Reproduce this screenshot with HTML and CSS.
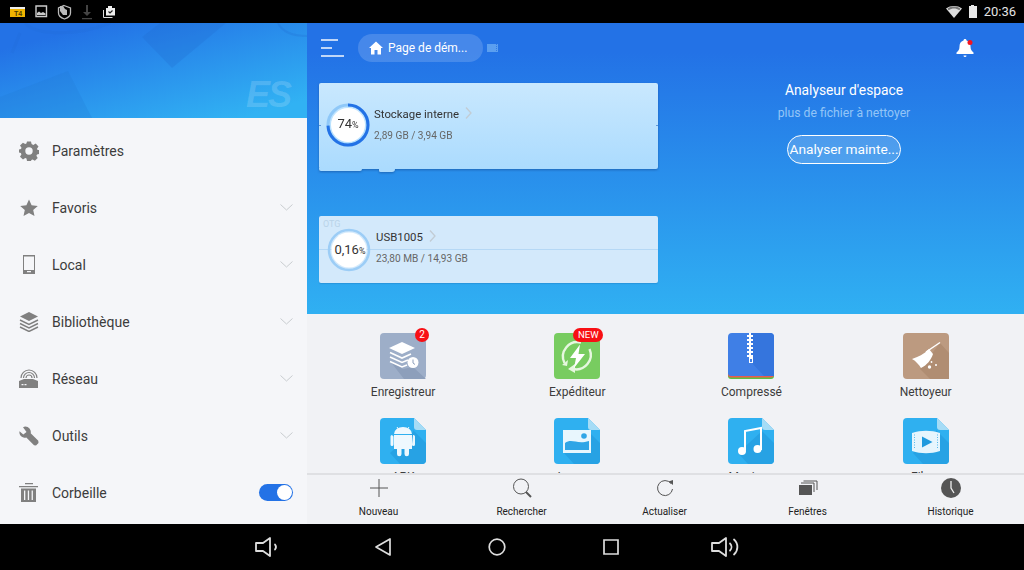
FILE: index.html
```html
<!DOCTYPE html>
<html lang="fr">
<head>
<meta charset="utf-8">
<title>ES</title>
<link rel="stylesheet" href="styles.css">
</head>
<body>
<div class="screen">
  <header class="status">
    <div class="status-left">
      <svg class="si" width="16" height="12" viewBox="0 0 16 12"><path fill="#f0b400" d="M0 3h15v8H0z"/><path fill="#eee" d="M0 1h15v2H0z"/><text x="4" y="9.5" class="t4">T4</text></svg>
      <svg class="si" width="13" height="13" viewBox="0 0 13 13"><path fill="none" stroke="#ccc" stroke-width="1.4" d="M1 1h10.500v10.500H1z"/><path fill="#ccc" d="M2 10V8l2-1.500 2 1.500 2-1 2.500 1.500V10z"/></svg>
      <svg class="si" width="15" height="16" viewBox="0 0 15 16"><path fill="none" stroke="#bbb" stroke-width="1.300" d="M7 1.500 13.500 4v5c0 3-3 5-6 6-3-1-6-3-6-6V4z"/><path fill="#bbb" d="M3 2l3 0 2 3 2 1v5H6L3 7z"/></svg>
      <svg class="si" width="12" height="16" viewBox="0 0 12 16"><path fill="#444" d="M5 1h2v7h3l-4 4-4-4h3zM1 14h10v1.300H1z"/></svg>
      <svg class="si" width="14" height="14" viewBox="0 0 14 14"><path fill="#eee" d="M4 3h2V1h4v2h3v7.500H4z"/><path fill="none" stroke="#222" stroke-width="1.200" d="M6.500 6.500l1.500 1.500 2.500-2.500"/><path fill="none" stroke="#ddd" d="M1.500 5v7.500h9"/></svg>
    </div>
    <div class="status-right">
      <svg width="16" height="12" viewBox="0 0 16 12"><path fill="#ddd" d="M0 2.500C4.500-.8 11.500-.8 16 2.500L8 12z"/><path fill="#777" d="M1.500 2.800C5-.2 11-.2 14.500 2.800L13.300 4.200C10 2 6 2 2.700 4.200z"/></svg>
      <svg width="10" height="13" viewBox="0 0 10 13"><path fill="#e8e8e8" d="M3 0h3v1h3v12H1V1h2z"/></svg>
      <span class="clock">20:36</span>
    </div>
  </header>

  <div class="app">
    <aside class="drawer">
      <div class="drawer-head">
        <svg class="drawer-art" width="307" height="95" viewBox="0 0 307 95">
          <path fill="#1f6bd0" fill-opacity=".28" d="M142 14 172 45 226 0H160z"/>
          <path fill="#1f78d0" fill-opacity=".22" d="M0 74 68 48 92 95H0z"/>
          <path fill="none" stroke="#1f6bd0" stroke-opacity=".18" stroke-width="3" d="M25 0c10 12 50 14 85 0M12 30l8-20"/>
          <path fill="none" stroke="#1f6bd0" stroke-opacity=".25" stroke-width="2" d="M278 0c5 10 15 13 29 13"/>
        </svg>
        <span class="es">ES</span>
      </div>
      <nav class="menu">
        <div class="mi">
          <svg class="mi-ic" width="20" height="20" viewBox="0 0 20 20"><path fill="#808080" fill-rule="evenodd" d="M8 .5h4l.6 2.600 1.700.8L16.700 2.500 19.500 5.500 18 7.700l.6 1.300H20v4l-2 .5-.6 1.300 1.300 2.300-2.800 2.700-2.300-1.300-1.200.5L12 20H8l-.5-2.500-1.300-.5-2.200 1.400L1 15.800l1.400-2.300L1.900 12 0 11.500V8.500l2-.5.500-1.300L1 4.500 3.900 1.700 6.200 3l1.200-.5zM10 6.300a3.700 3.700 0 1 0 0 7.400 3.700 3.700 0 0 0 0-7.400z"/></svg>
          <span class="mi-label">Paramètres</span>
        </div>
        <div class="mi">
          <svg class="mi-ic" width="20" height="20" viewBox="0 0 20 20"><path fill="#808080" d="M10 1.500l2.600 5.700 6.200.7-4.600 4.100 1.300 6.100L10 15l-5.500 3.100 1.300-6.100L1.200 7.900l6.200-.7z"/></svg>
          <span class="mi-label">Favoris</span>
          <svg class="chev" width="13" height="7" viewBox="0 0 13 7"><path fill="none" stroke="#c8ccd0" d="M.5.500l6 5.500 6-5.500"/></svg>
        </div>
        <div class="mi">
          <svg class="mi-ic" width="20" height="20" viewBox="0 0 20 20"><path fill="#808080" d="M4 0h12v19H4zM5 1.500v13.500h10V1.500zM8 16v1.300h4V16z" fill-rule="evenodd"/></svg>
          <span class="mi-label">Local</span>
          <svg class="chev" width="13" height="7" viewBox="0 0 13 7"><path fill="none" stroke="#c8ccd0" d="M.5.500l6 5.500 6-5.500"/></svg>
        </div>
        <div class="mi">
          <svg class="mi-ic" width="20" height="20" viewBox="0 0 20 20"><path fill="#808080" d="M10 0l9 4.500-9 4.500-9-4.500z"/><path fill="none" stroke="#808080" stroke-width="1.400" d="M1 8l9 4.500L19 8M1 11.500 10 16l9-4.500M1 15l9 4.500 9-4.500"/></svg>
          <span class="mi-label">Bibliothèque</span>
          <svg class="chev" width="13" height="7" viewBox="0 0 13 7"><path fill="none" stroke="#c8ccd0" d="M.5.500l6 5.500 6-5.500"/></svg>
        </div>
        <div class="mi">
          <svg class="mi-ic" width="20" height="20" viewBox="0 0 20 20"><path fill="#808080" fill-rule="evenodd" d="M0 12 5 10h9l5 2v7H0zM2.500 15v1.300h2V15zM5.500 15v1.300h2V15z"/><path fill="none" stroke="#808080" stroke-width="1.200" d="M7 9a3 3 0 0 1 6 0M4.500 9a5.500 5.500 0 0 1 11 0M2 9a8 8 0 0 1 16 0"/></svg>
          <span class="mi-label">Réseau</span>
          <svg class="chev" width="13" height="7" viewBox="0 0 13 7"><path fill="none" stroke="#c8ccd0" d="M.5.500l6 5.500 6-5.500"/></svg>
        </div>
        <div class="mi">
          <svg class="mi-ic" width="20" height="20" viewBox="0 0 20 20"><path fill="#808080" d="M6 .500A5.500 5.500 0 0 1 11.700 7.200L19.300 14.800 19.500 17 17 19.500l-2-.3L7.300 11.600A5.500 5.500 0 0 1 .5 5.200L4.300 8.500 7.500 6 4 1.200z"/></svg>
          <span class="mi-label">Outils</span>
          <svg class="chev" width="13" height="7" viewBox="0 0 13 7"><path fill="none" stroke="#c8ccd0" d="M.5.500l6 5.500 6-5.500"/></svg>
        </div>
        <div class="mi">
          <svg class="mi-ic" width="20" height="20" viewBox="0 0 20 20"><path fill="#808080" d="M6 0h8v1.200H6zM0 3h19v1.200H0zM2 5.500h15V19H2zM5 7.500V17h1.300V7.500zM8.800 7.500V17h1.300V7.500zM12.600 7.500V17h1.300V7.500z" fill-rule="evenodd"/></svg>
          <span class="mi-label">Corbeille</span>
          <span class="toggle"><span class="knob"></span></span>
        </div>
      </nav>
    </aside>

    <main class="main">
      <section class="hero">
        <div class="topbar">
          <svg class="burger" width="23" height="18" viewBox="0 0 23 18"><path fill="none" stroke="#fff" stroke-opacity=".95" stroke-width="1.700" d="M0 1h17M0 9h11M0 17h23"/></svg>
          <div class="crumb">
            <svg width="14" height="14" viewBox="0 0 14 14"><path fill="#fff" d="M7 .5l7 6.500h-2v6.500H8.500V9h-3v4.500H2V7H0z"/></svg>
            <span class="crumb-text">Page de dém...</span>
          </div>
          <svg class="crumb-mini" width="11" height="8" viewBox="0 0 11 8"><path fill="#5b9ff0" d="M0 0h11v8H0z"/><path stroke="#2f7ae6" stroke-dasharray="1 1" d="M9.500 0v8"/></svg>
          <div class="bell">
            <svg width="18" height="20" viewBox="0 0 18 20"><path fill="#fff" d="M9 1c1 0 1.500.7 1.500 1.500C13.500 3.300 14.500 6 14.500 8.500c0 3 1 4.500 3 6V16H.5v-1.500c2-1.500 3-3 3-6C3.500 6 4.500 3.300 7.500 2.500 7.500 1.700 8 1 9 1zM7.500 17.500h3a1.500 1.500 0 0 1-3 0z"/><circle cx="14" cy="4.500" r="2.500" fill="#f5141e"/></svg>
          </div>
        </div>
        <div class="hero-body">
          <div class="cards">
            <article class="card card-int">
              <svg class="ring" width="44" height="44" viewBox="0 0 44 44">
                <circle cx="22" cy="22" r="17" fill="#fff"/>
                <circle cx="22" cy="22" r="20" fill="none" stroke="#8fc8f8" stroke-width="3"/>
                <circle cx="22" cy="22" r="20" fill="none" stroke="#2372e6" stroke-width="3" stroke-dasharray="93 126" transform="rotate(-90 22 22)"/>
              </svg>
              <span class="ring-val ring-int">74<small>%</small></span>
              <div class="card-text">
                <div class="card-title">Stockage interne<svg class="mini-chev" width="7" height="12" viewBox="0 0 7 12"><path fill="none" stroke="#c2ccd4" stroke-width="1.300" d="M1 .5l5 5.500-5 5.500"/></svg></div>
                <div class="card-sub">2,89 GB / 3,94 GB</div>
              </div>
            </article>
            <article class="card card-usb">
              <span class="otg">OTG</span>
              <svg class="ring" width="44" height="44" viewBox="0 0 44 44">
                <circle cx="22" cy="22" r="17.500" fill="#fff"/>
                <circle cx="22" cy="22" r="20" fill="none" stroke="#9ccdf6" stroke-width="2.500"/>
              </svg>
              <span class="ring-val ring-usb">0,16<small>%</small></span>
              <div class="card-text">
                <div class="card-title">USB1005<svg class="mini-chev" width="7" height="12" viewBox="0 0 7 12"><path fill="none" stroke="#c2ccd4" stroke-width="1.300" d="M1 .5l5 5.500-5 5.500"/></svg></div>
                <div class="card-sub">23,80 MB / 14,93 GB</div>
              </div>
            </article>
          </div>
          <div class="analyzer">
            <div class="an-title">Analyseur d'espace</div>
            <div class="an-sub">plus de fichier à nettoyer</div>
            <div class="an-btn">Analyser mainte...</div>
          </div>
        </div>
      </section>

      <section class="grid">
        <div class="tile">
          <div class="tile-icon">
            <svg width="46" height="46" viewBox="0 0 46 46"><rect width="46" height="46" rx="4" fill="#9daec8"/><path fill="#8d9fbb" d="M10 28 23 36 33 34 46 46H24z"/><path fill="#fff" d="M22 9l13 6-13 6-13-6z"/><path fill="none" stroke="#fff" stroke-width="1.600" d="M10 19.500l12 5.500 9-4M10 24l12 5.500 6-2.500M10 28.500l12 5.500 5-2"/><circle cx="33" cy="29.500" r="5.500" fill="#fff"/><path fill="none" stroke="#8d9fbb" d="M33 26.500v3.500l2 1.500"/></svg>
            <span class="badge badge-num">2</span>
          </div>
          <span class="tile-label">Enregistreur</span>
        </div>
        <div class="tile">
          <div class="tile-icon">
            <svg width="46" height="46" viewBox="0 0 46 46"><rect width="46" height="46" rx="4" fill="#78cc60"/><path fill="none" stroke="#e6f7df" stroke-width="2.400" d="M10.500 30A14.500 14.500 0 0 1 27 9.500M35.500 16A14.500 14.500 0 0 1 19 36"/><path fill="#e6f7df" d="M13 33l-5-1 6-5zM14 36l7-5v9z"/><path fill="#fff" d="M26 11.500 16 25h6l-2 10L31 21h-6.500z"/></svg>
            <span class="badge badge-new">NEW</span>
          </div>
          <span class="tile-label">Expéditeur</span>
        </div>
        <div class="tile">
          <div class="tile-icon">
            <svg width="46" height="46" viewBox="0 0 46 46"><path fill="#5cc143" d="M0 36h46v7a3 3 0 0 1-3 3H3a3 3 0 0 1-3-3z"/><path fill="#ea5a50" d="M0 34h46v8a3 3 0 0 1-3 2.500H3a3 3 0 0 1-3-2.500z"/><path fill="#3f7fe6" d="M4 0h38a4 4 0 0 1 4 4v37a3 3 0 0 1-3 2H3a3 3 0 0 1-3-2V4a4 4 0 0 1 4-4z"/><path fill="#3575dd" d="M26 0H42a4 4 0 0 1 4 4V43H36L22 28V0z"/><path fill="#fff" d="M21 0h2v2h2v2h-2v2h2v2h-2v2h2v2h-2v2h2v2h-2v2h2v2h-2v2h2v2h-2v2h-2v-2h-2v-2h2v-2h-2v-2h2v-2h-2v-2h2v-2h-2v-2h2V8h-2V6h2V4h-2V2h2z"/><path fill="#fff" d="M21 24h4v6h-4z"/><path fill="#3f7fe6" d="M22 26h2v3h-2z"/></svg>
          </div>
          <span class="tile-label">Compressé</span>
        </div>
        <div class="tile">
          <div class="tile-icon">
            <svg width="46" height="46" viewBox="0 0 46 46"><rect width="46" height="46" rx="4" fill="#bc9a80"/><path fill="#b08d72" d="M17 36 37 10 46 20V46H27z"/><path stroke="#fff" stroke-width="1.500" d="M23 19 37 9.500"/><path fill="#fff" d="M26 16 30 21C28 27 24 32 18 35 16 32 13 28 9 26 15 24 21 21 26 16z"/><circle cx="26.500" cy="34" r="1.700" fill="#fff"/><circle cx="33" cy="32" r="1" fill="#fff"/><circle cx="28.500" cy="29" r=".9" fill="#fff"/></svg>
          </div>
          <span class="tile-label">Nettoyeur</span>
        </div>
        <div class="tile">
          <div class="tile-icon">
            <svg width="46" height="46" viewBox="0 0 46 46"><path fill="#2fb0f0" d="M4 0h30l12 12v30a4 4 0 0 1-4 4H4a4 4 0 0 1-4-4V4a4 4 0 0 1 4-4z"/><path fill="#27a2e4" d="M33 14V12l13 13V42a4 4 0 0 1-4 4H20L10 35z"/><path fill="#a5dcf6" d="M34 0l12 12H37a3 3 0 0 1-3-3z"/><path fill="#eef8fe" d="M14 17h18v14H14zM12 17a1.500 1.500 0 0 0-1.500 1.500v8a1.500 1.500 0 0 0 3 0v-8zM33 17h.5a1.500 1.500 0 0 1 1.500 1.500v8a1.500 1.500 0 0 1-3 0zM17 31h4.500v5a2 2 0 0 1-4.500 0zM24.500 31H29v5a2 2 0 0 1-4.500 0z"/><path fill="#eef8fe" d="M14 16a9 7 0 0 1 18 0z"/><path stroke="#eef8fe" d="M17 9l2 3M29 9l-2 3"/></svg>
          </div>
          <span class="tile-label">APK</span>
        </div>
        <div class="tile">
          <div class="tile-icon">
            <svg width="46" height="46" viewBox="0 0 46 46"><path fill="#2fb0f0" d="M4 0h30l12 12v30a4 4 0 0 1-4 4H4a4 4 0 0 1-4-4V4a4 4 0 0 1 4-4z"/><path fill="#27a2e4" d="M33 14V12l13 13V42a4 4 0 0 1-4 4H20L10 35z"/><path fill="#a5dcf6" d="M34 0l12 12H37a3 3 0 0 1-3-3z"/><path fill="#e8f6fd" d="M9 12h28v23H9z"/><path fill="#2fa5e6" d="M11 32v-7c7-5 12 2 24-2v9z"/><circle cx="30" cy="18" r="2.800" fill="#2fa5e6"/></svg>
          </div>
          <span class="tile-label">Images</span>
        </div>
        <div class="tile">
          <div class="tile-icon">
            <svg width="46" height="46" viewBox="0 0 46 46"><path fill="#2fb0f0" d="M4 0h30l12 12v30a4 4 0 0 1-4 4H4a4 4 0 0 1-4-4V4a4 4 0 0 1 4-4z"/><path fill="#27a2e4" d="M33 14V12l13 13V42a4 4 0 0 1-4 4H20L10 35z"/><path fill="#a5dcf6" d="M34 0l12 12H37a3 3 0 0 1-3-3z"/><path fill="none" stroke="#fff" stroke-width="2" d="M17 32V13l16-3v22"/><circle cx="14" cy="33" r="4" fill="#fff"/><circle cx="29.500" cy="31" r="4" fill="#fff"/></svg>
          </div>
          <span class="tile-label">Musique</span>
        </div>
        <div class="tile">
          <div class="tile-icon">
            <svg width="46" height="46" viewBox="0 0 46 46"><path fill="#2fb0f0" d="M4 0h30l12 12v30a4 4 0 0 1-4 4H4a4 4 0 0 1-4-4V4a4 4 0 0 1 4-4z"/><path fill="#27a2e4" d="M33 14V12l13 13V42a4 4 0 0 1-4 4H20L10 35z"/><path fill="#a5dcf6" d="M34 0l12 12H37a3 3 0 0 1-3-3z"/><path fill="#e6f5fd" d="M9 15c9-3 19-3 28 0v18c-9 3-19 3-28 0z"/><path fill="#1f9ade" d="M19 18.500 29.500 24 19 29.500z"/><path stroke="#55b8ec" stroke-dasharray="1 1.500" d="M11.500 16.500v15M34.500 16.500v15"/></svg>
          </div>
          <span class="tile-label">Films</span>
        </div>
      </section>

      <footer class="toolbar">
        <div class="tool">
          <svg width="20" height="20" viewBox="0 0 20 20"><path fill="none" stroke="#555" d="M10 1v18M1 10h18"/></svg>
          <span class="tool-label">Nouveau</span>
        </div>
        <div class="tool">
          <svg width="20" height="20" viewBox="0 0 20 20"><circle cx="9" cy="8.500" r="7.500" fill="none" stroke="#555"/><path stroke="#555" stroke-width="2" d="M14 14l5 5"/></svg>
          <span class="tool-label">Rechercher</span>
        </div>
        <div class="tool">
          <svg width="20" height="20" viewBox="0 0 20 20"><path fill="none" stroke="#555" d="M16 5.500A7.500 7.500 0 1 0 17.500 11"/><path fill="#555" d="M13.500 3.500 18 2v5z"/></svg>
          <span class="tool-label">Actualiser</span>
        </div>
        <div class="tool">
          <svg width="20" height="20" viewBox="0 0 20 20"><path fill="#555" d="M1 7h13v10H1z"/><path fill="none" stroke="#555" d="M3 5h13v9M5.500 3H19v9"/></svg>
          <span class="tool-label">Fenêtres</span>
        </div>
        <div class="tool">
          <svg width="20" height="20" viewBox="0 0 20 20"><circle cx="10" cy="10" r="10" fill="#555"/><path fill="none" stroke="#eee" stroke-width="1.300" d="M10 3v7l3 5"/></svg>
          <span class="tool-label">Historique</span>
        </div>
      </footer>
    </main>
  </div>

  <footer class="navbar">
    <svg class="vol-down" width="25" height="22" viewBox="0 0 25 22"><path fill="none" stroke="#ddd" stroke-width="1.800" stroke-linejoin="round" stroke-linecap="round" d="M2 7h7l7-5v18l-7-5H2zM21 8.500c1.200 1.500 1.200 3.500 0 5"/></svg>
    <svg width="18" height="18" viewBox="0 0 18 18"><path fill="none" stroke="#ddd" stroke-width="1.700" stroke-linejoin="round" d="M2 9l14-8v16z"/></svg>
    <svg width="18" height="18" viewBox="0 0 18 18"><circle cx="9" cy="9" r="7.800" fill="none" stroke="#ddd" stroke-width="1.700"/></svg>
    <svg width="16" height="16" viewBox="0 0 16 16"><path fill="none" stroke="#ddd" stroke-width="1.700" d="M1 1h14v14H1z"/></svg>
    <svg width="30" height="22" viewBox="0 0 30 22"><path fill="none" stroke="#ddd" stroke-width="1.800" stroke-linejoin="round" stroke-linecap="round" d="M2 7h7l7-5v18l-7-5H2zM20 7.500c2 2 2 5 0 7M24 3.500c4.500 4 4.500 11 0 15"/></svg>
  </footer>
</div>
</body>
</html>
```

FILE: styles.css
```css
* { box-sizing: border-box; }
html, body { margin: 0; padding: 0; }
body { width: 1024px; height: 570px; overflow: hidden; font-family: Roboto, "Liberation Sans", sans-serif; background: #000; }
.screen { display: flex; flex-direction: column; width: 1024px; height: 570px; }

.status { height: 23px; flex: none; background: #000; display: flex; justify-content: space-between; align-items: center; padding: 0 8px 0 10px; }
.status-left { display: flex; align-items: center; gap: 9px; }
.status-left .si { display: block; }
.t4 { font: 700 7px "Liberation Sans", sans-serif; fill: #4a3a00; }
.status-right { display: flex; align-items: center; gap: 6px; }
.clock { color: #e4e4e4; font-size: 13px; }

.app { flex: 1; display: flex; min-height: 0; }

.drawer { width: 307px; flex: none; background: #f5f6f9; display: flex; flex-direction: column; }
.drawer-head { height: 95px; flex: none; position: relative; overflow: hidden; background: linear-gradient(165deg, #2372e6 15%, #31b2f3 90%); }
.drawer-art { position: absolute; left: 0; top: 0; }
.es { position: absolute; left: 246px; top: 52px; font: italic 700 36px/40px "Liberation Sans", sans-serif; letter-spacing: -2px; color: rgba(255,255,255,.17); }
.menu { padding-top: 4px; }
.mi { height: 57px; display: flex; align-items: center; padding: 0 14px 0 19px; }
.mi-ic { flex: none; margin-right: 13px; }
.mi-label { flex: 1; font-size: 14px; color: #3c3c3c; }
.chev { flex: none; }
.toggle { width: 34px; height: 17px; border-radius: 9px; background: #2372e6; display: flex; justify-content: flex-end; align-items: center; padding-right: 1px; }
.knob { width: 15px; height: 15px; border-radius: 50%; background: #fff; }

.main { flex: 1; display: flex; flex-direction: column; min-width: 0; background: #f1f2f5; }

.hero { height: 291px; flex: none; background: linear-gradient(180deg, #2372e6 0%, #2372e6 10%, #30b0f2 100%); }
.topbar { height: 60px; position: relative; display: flex; align-items: center; padding: 0 0 10px 14px; }
.burger { flex: none; margin-right: 14px; }
.crumb { width: 125px; height: 28px; border-radius: 14px; background: rgba(255,255,255,.16); display: flex; align-items: center; gap: 5px; padding-left: 11px; margin-right: 4px; }
.crumb-text { font-size: 12px; color: #fff; white-space: nowrap; }
.crumb-mini { flex: none; }
.bell { position: absolute; left: 649px; top: 15px; line-height: 0; }

.hero-body { display: flex; align-items: flex-start; }
.cards { width: 339px; margin-left: 12px; flex: none; display: flex; flex-direction: column; gap: 47px; }
.card { position: relative; display: flex; align-items: center; border-radius: 2px; }
.card-int { height: 86px; background: linear-gradient(#5f98d8, #5f98d8) left 42px / 2px 1px no-repeat, linear-gradient(#5f98d8, #5f98d8) right 42px / 2px 1px no-repeat, linear-gradient(180deg, #c9e8fe, #abdbfe); filter: drop-shadow(0 1px 1px rgba(20,70,140,.55)); padding: 0 0 2px 7px; }
.card-int::before { content: ""; position: absolute; left: 0; bottom: -2px; width: 43px; height: 3px; background: #abdbfe; border-radius: 0 0 2px 2px; }
.card-int::after { content: ""; position: absolute; left: 60px; bottom: -3px; width: 16px; height: 3px; background: #abdbfe; border-radius: 0 0 4px 2px; }
.card-usb { height: 67px; background: #d3e9fb; box-shadow: 0 1px 1px rgba(20,90,160,.25); padding: 0 0 0 8px; }
.card-usb::before { content: ""; position: absolute; left: 0; right: 0; top: 33px; height: 1px; background: #b5d8f5; }
.ring { flex: none; position: relative; }
.ring-val { position: absolute; width: 44px; text-align: center; font-size: 13px; color: #333; line-height: 16px; }
.ring-val small { font-size: 9px; }
.ring-int { left: 7px; top: 33px; }
.ring-usb { left: 9px; top: 26px; }
.card-text { margin-left: 4px; position: relative; }
.card-usb .card-text { margin-left: 5px; top: -2px; }
.card-title { font-size: 11.400px; line-height: 13px; color: #333; display: flex; align-items: center; gap: 6px; }
.card-sub { font-size: 10.100px; line-height: 12px; color: #666; margin-top: 9px; }
.mini-chev { flex: none; margin-top: -3px; }
.otg { position: absolute; left: 4px; top: 3px; font-size: 9px; color: #b9d3e8; }

.analyzer { flex: 1; padding: 0 0 0 6px; display: flex; flex-direction: column; align-items: center; }
.an-title { font-size: 13.800px; line-height: 16px; color: #fff; margin-top: -1px; }
.an-sub { font-size: 12.200px; line-height: 14px; color: #93c5f7; margin-top: 8px; }
.an-btn { width: 114px; height: 29px; border: 1px solid #fff; border-radius: 15px; background: rgba(255,255,255,.18); color: #fff; font-size: 13.700px; line-height: 27px; text-align: center; white-space: nowrap; margin-top: 15px; }

.grid { flex: 1; min-height: 0; overflow: hidden; display: grid; grid-template-columns: repeat(4, 174.2px); grid-auto-rows: 85px; padding: 19px 0 0 9px; }
.tile { display: flex; flex-direction: column; align-items: center; }
.tile-icon { position: relative; width: 46px; height: 46px; line-height: 0; }
.tile-label { font-size: 12px; line-height: 14px; color: #3c3c3c; margin-top: 6px; }
.badge { position: absolute; background: #f80f14; color: #fff; text-align: center; border-radius: 7px; height: 14px; line-height: 14px; font-size: 10px; }
.badge-num { width: 14px; top: -5px; right: -3px; }
.badge-new { width: 30px; top: -5px; right: -3px; font-size: 9.500px; }

.toolbar { height: 51px; flex: none; border-top: 2px solid #dfe0e3; display: grid; grid-template-columns: repeat(5, 1fr); padding-right: 2px; background: #f1f2f5; }
.tool { display: flex; flex-direction: column; align-items: center; padding-top: 3px; }
.tool-label { font-size: 10px; line-height: 12px; color: #222; margin-top: 8px; }

.navbar { height: 46px; flex: none; background: #000; display: grid; grid-template-columns: repeat(5, 114px); align-items: center; justify-items: center; padding-left: 212px; }
.vol-down { margin-right: 6px; }
```
